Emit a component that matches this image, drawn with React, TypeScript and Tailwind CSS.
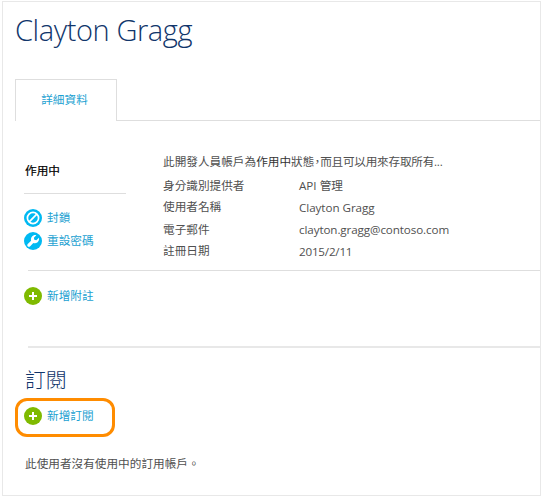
import type { ReactNode } from "react";

const details: { label: string; value: string; labelClass: string; valueClass: string }[] = [
  { label: "身分識別提供者", value: "API 管理", labelClass: "pt-px", valueClass: "pt-px" },
  { label: "使用者名稱", value: "Clayton Gragg", labelClass: "", valueClass: "tracking-[-0.05px] pt-px" },
  { label: "電子郵件", value: "clayton.gragg@contoso.com", labelClass: "pt-px", valueClass: "tracking-[-0.1px] pt-px" },
  { label: "註冊日期", value: "2015/2/11", labelClass: "", valueClass: "tracking-[-0.2px] pt-px" },
];

function BlockIcon() {
  return (
    <svg className="size-[18px] shrink-0" viewBox="0 0 18 18" fill="none">
      <circle cx="9" cy="9" r="9" fill="#00b9f2" />
      <circle cx="9" cy="9" r="5.600" stroke="#fff" strokeWidth="1.700" />
      <path d="M5.200 12.800 12.800 5.200" stroke="#fff" strokeWidth="1.700" />
    </svg>
  );
}

function WrenchIcon() {
  return (
    <svg className="size-[18px] shrink-0" viewBox="0 0 18 18">
      <circle cx="9" cy="9" r="9" fill="#00b9f2" />
      <path
        d="M12.300 3.200 9.900 5.700l.4 2 2 .5 2.700-2.400c.5 3.100-1.500 5.700-4.300 5.400-.6 0-1-.1-1.400-.2l-3.100 3.300c-1.500 1.500-4-.7-2.500-2.400l3.400-3.200C6.300 5.300 9 2.600 12.300 3.200Z"
        fill="#fff"
      />
    </svg>
  );
}

function AddIcon() {
  return (
    <svg className="size-[18px] shrink-0" viewBox="0 0 18 18">
      <circle cx="9" cy="9" r="9" fill="#7fba00" />
      <path d="M9 5v8M5 9h8" stroke="#fff" strokeWidth="2" />
    </svg>
  );
}

function Action({ icon, children }: { icon: ReactNode; children: ReactNode }) {
  return (
    <a className="flex h-[18px] items-center gap-[5px] text-[#1ba1d1]">
      {icon}
      <span className="whitespace-nowrap">{children}</span>
    </a>
  );
}

export default function App() {
  return (
    <div className="h-[497px] w-[541px] overflow-hidden bg-white pt-px pb-px pl-[2px] font-['Open_Sans','Noto_Sans_CJK_TC',sans-serif] text-[11.65px] leading-[18px] text-[#505050]">
      <main className="flex h-[495px] flex-col border border-[#e8e8e8]">
        <h1 className="h-[77px] pt-[8px] pl-[12px] text-[29px] leading-[40px] font-light tracking-[-0.4px] text-[#11366b]">
          Clayton Gragg
        </h1>
        <nav className="flex h-[42px] shrink-0">
          <div className="w-[12px]" />
          <div className="flex w-[102px] items-center justify-center border-x border-t border-[#dedede] pr-[3px] pb-px text-[#1ba1d1]">
            詳細資料
          </div>
          <div className="flex-1 border-b border-[#dedede]" />
        </nav>

        <section className="flex h-[149px] shrink-0">
          <aside className="w-[160px] pl-[21px]">
            <div className="mt-[41px] h-[31px] pl-px text-black [-webkit-text-stroke:0.2px]">作用中</div>
            <div className="h-px w-[102px] bg-[#dedede]" />
            <div className="mt-[15px] flex flex-col gap-[5px]">
              <Action icon={<BlockIcon />}>封鎖</Action>
              <Action icon={<WrenchIcon />}>重設密碼</Action>
            </div>
          </aside>
          <div className="flex-1 pt-[32px]">
            <p className="h-[23px] whitespace-nowrap">
              此開發人員帳戶為<span className="text-[#333333]">作用中</span>狀態
              <span className="[font-feature-settings:'halt']">，</span>
              <span className="tracking-[-0.25px]">而且可以用來存取所有...</span>
            </p>
            {details.map((row) => (
              <div key={row.label} className="flex h-[22px]">
                <span className={`w-[136px] ${row.labelClass}`}>{row.label}</span>
                <span className={row.valueClass}>{row.value}</span>
              </div>
            ))}
          </div>
        </section>

        <section className="ml-[25px] h-[76px] shrink-0 border-t border-[#dedede] pt-[16px]">
          <div className="-ml-[4px]">
            <Action icon={<AddIcon />}>新增附註</Action>
          </div>
        </section>

        <section className="flex-1">
          <div className="ml-[25px] h-[2px] bg-[#e8e8e8]" />
          <h2 className="h-[50px] pt-[14px] pl-[22px] text-[20.8px] leading-[36px] font-light text-[#11366b]">訂閱</h2>
          <div className="ml-[12px] flex h-[39px] w-[100px] items-center rounded-[12px] border-3 border-[#ff8c00] pb-[3px] pl-[6px]">
            <Action icon={<AddIcon />}>新增訂閱</Action>
          </div>
          <p className="mt-[18px] pl-[22px]">此使用者沒有使用中的訂用帳戶。</p>
        </section>
      </main>
    </div>
  );
}
